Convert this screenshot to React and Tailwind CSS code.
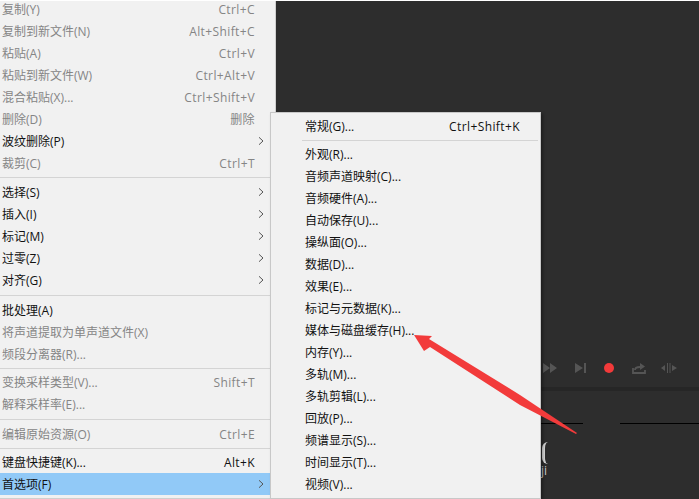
const font = { fontFamily: '"Open Sans", "Noto Sans CJK SC", sans-serif' }

function Chevron() {
  return (
    <svg width="6" height="9" viewBox="0 0 6 9" className="absolute right-[11px] top-1/2 -translate-y-1/2" fill="none" stroke="#555" strokeWidth="1">
      <path d="M1 .8 5 4.500 1 8.200" />
    </svg>
  )
}

function Row({ label, keys, off, sub, active, h = 'h-[22px]' }) {
  return (
    <div className={`relative flex items-center justify-between pl-[2px] pr-[20px] text-[12px] ${h} ${off ? 'text-[#858585]' : 'text-[#111]'} ${active ? 'bg-[#91c9f7]' : ''}`}>
      <span className="whitespace-nowrap pt-[2px]">{label}</span>
      {keys && <span className="whitespace-nowrap pt-[2px] tracking-[0.4px]">{keys}</span>}
      {sub && <Chevron />}
    </div>
  )
}

function Sep({ h = 'h-[7px]' }) {
  return (
    <div className={`flex items-center ${h}`}>
      <div className="h-px w-full bg-[#d4d4d4]" />
    </div>
  )
}

function SubRow({ label, keys, h = 'h-[22px]' }) {
  return (
    <div className={`flex items-center justify-between pl-[34px] pr-[20px] text-[12px] text-[#111] ${h}`}>
      <span className="whitespace-nowrap pt-[2px]">{label}</span>
      {keys && <span className="whitespace-nowrap pt-[2px] tracking-[0.4px]">{keys}</span>}
    </div>
  )
}

function MainMenu() {
  return (
    <div className="w-[276px] shrink-0 border-b border-r border-[#cfcfcf] bg-[#f1f1f1]">
      <Row off label="复制(Y)" keys="Ctrl+C" h="h-[19px] pb-[3px]" />
      <Row off label="复制到新文件(N)" keys="Alt+Shift+C" />
      <Row off label="粘贴(A)" keys="Ctrl+V" />
      <Row off label="粘贴到新文件(W)" keys="Ctrl+Alt+V" />
      <Row off label="混合粘贴(X)..." keys="Ctrl+Shift+V" />
      <Row off label="删除(D)" keys="删除" />
      <Row sub label="波纹删除(P)" />
      <Row off label="裁剪(C)" keys="Ctrl+T" />
      <Sep />
      <Row sub label="选择(S)" />
      <Row sub label="插入(I)" />
      <Row sub label="标记(M)" />
      <Row sub label="过零(Z)" />
      <Row sub label="对齐(G)" />
      <Sep h="h-[8px]" />
      <Row label="批处理(A)" />
      <Row off label="将声道提取为单声道文件(X)" />
      <Row off label="频段分离器(R)..." />
      <Sep h="h-[6px]" />
      <Row off label="变换采样类型(V)..." keys="Shift+T" />
      <Row off label="解释采样率(E)..." />
      <Sep h="h-[8px]" />
      <Row off label="编辑原始资源(O)" keys="Ctrl+E" />
      <Sep h="h-[6px]" />
      <Row label="键盘快捷键(K)..." keys="Alt+K" />
      <Row active sub label="首选项(F)" />
    </div>
  )
}

function SubMenu() {
  return (
    <div className="absolute left-[270px] top-[111px] w-[271px] border border-[#c8c8c8] bg-[#f1f1f1] pb-[3px] pt-[2px] shadow-[2px_2px_3px_rgba(0,0,0,0.35)]">
      <SubRow label="常规(G)..." keys="Ctrl+Shift+K" />
      <div className="flex h-[6px] items-center pl-[31px] pr-[2px]">
        <div className="h-px w-full bg-[#d4d4d4]" />
      </div>
      {['外观(R)...', '音频声道映射(C)...', '音频硬件(A)...', '自动保存(U)...', '操纵面(O)...', '数据(D)...', '效果(E)...', '标记与元数据(K)...', '媒体与磁盘缓存(H)...', '内存(Y)...', '多轨(M)...', '多轨剪辑(L)...', '回放(P)...', '频谱显示(S)...', '时间显示(T)...', '视频(V)...'].map((t) => (
        <SubRow key={t} label={t} />
      ))}
    </div>
  )
}

function Transport() {
  return (
    <div className="flex h-[22px] items-center justify-end gap-[18px] pr-[22px]">
      <svg width="14" height="10" viewBox="0 0 14 10" fill="#555"><path d="M0 0 7 5 0 10zM7 0l7 5-7 5z" /></svg>
      <svg width="11" height="10" viewBox="0 0 11 10" fill="#555"><path d="M0 0 8 5 0 10zM9 0H11V10H9z" /></svg>
      <div className="h-[10px] w-[10px] rounded-full bg-[#f23a3a]" />
      <svg width="14" height="11" viewBox="0 0 14 11" fill="none" stroke="#555" strokeWidth="1.800"><path d="M1 5v5h12V7M3 7c0-2 2-3 5-3" /><path d="M8 0l5 3.500L8 7z" fill="#555" stroke="none" /></svg>
      <svg width="16" height="10" viewBox="0 0 16 10" fill="#555" className="-ml-[3px]"><path d="M0 5 4 2v6zM16 5l-5-3v6zM6 0h1v10H6zM8.500 0h1v10h-1z" /></svg>
    </div>
  )
}

function Arrow() {
  return (
    <svg className="absolute left-[410px] top-[329px]" width="172" height="106" viewBox="0 0 172 106">
      <path d="M4 5 22 6 19 9 110 65 167 103 166 104 110 75 20 17 14 21Z" fill="#f23b3b" />
    </svg>
  )
}

export default function App() {
  return (
    <div className="relative flex h-[499px] w-[699px] overflow-hidden border-t border-white bg-[#2d2d2d]" style={font}>
      <MainMenu />
      <div className="flex min-w-0 flex-1 flex-col pt-[356px]">
        <Transport />
        <div className="mt-[8px] h-[4px] bg-[#262626]" />
        <div className="mt-[32px] flex pl-[265px]">
          <div className="h-px w-[42px] bg-black" />
          <div className="w-[37px]" />
          <div className="h-px flex-1 bg-black" />
        </div>
        <div className="relative mt-[18px] pl-[265px] leading-none text-[#cfcfcf]">
          <div className="ml-[1px] h-[22px] w-[6px] rounded-l-full border-l-[3px] border-[#d8d8d8]" />
          <div className="mt-[1px] text-[12px]">ji</div>
        </div>
      </div>
      <SubMenu />
      <Arrow />
    </div>
  )
}
